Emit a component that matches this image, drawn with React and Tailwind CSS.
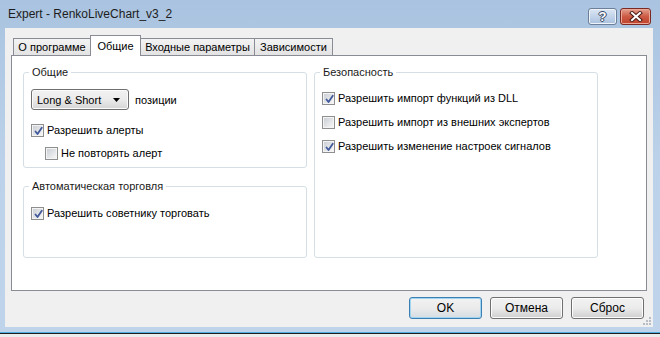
import React from 'react'

function CheckBox({ checked, label, className = '' }) {
    return (
        <div className={`flex h-[14px] items-center ${className}`}>
            <span className="relative flex h-[13px] w-[13px] shrink-0 items-center justify-center border border-[#8e8f8f] bg-white">
                <span className="h-[11px] w-[11px] border border-[#f4f4f4] bg-gradient-to-br from-[#cbcfd5] to-[#f6f6f6]" />
                {checked && (
                    <svg className="absolute left-[1px] top-[1px]" width="11" height="11" viewBox="0 0 11 11">
                        <path d="M2.5 5.5 L4.5 8 L8.8 1.8" fill="none" stroke="#41599b" strokeWidth="1.8" strokeLinecap="round" strokeLinejoin="round" />
                    </svg>
                )}
            </span>
            <span className="ml-[3px] whitespace-nowrap text-[11px] leading-[14px] text-[#000]">{label}</span>
        </div>
    )
}

function GroupBox({ title, className = '', children }) {
    return (
        <fieldset className={`rounded-[3px] border border-[#d5dfe5] px-[7px] ${className}`}>
            <legend className="-ml-[2px] px-[3px] text-[11px] leading-[14px] text-[#1a1a1a]">{title}</legend>
            {children}
        </fieldset>
    )
}

function Button({ label, primary }) {
    return (
        <button
            className={`flex h-[22px] w-[73px] items-center justify-center rounded-[3px] border font-['Liberation_Sans',Arial,sans-serif] text-[12px] font-normal text-black ${
                primary
                    ? 'border-[#3c7fb1] bg-gradient-to-b from-[#f2f2f2] via-[#ebebeb] to-[#d6dde2] shadow-[inset_0_0_0_1px_#9fd5f3]'
                    : 'border-[#707070] bg-gradient-to-b from-[#f2f2f2] via-[#ebebeb] to-[#cfcfcf] shadow-[inset_0_0_0_1px_#fcfcfc]'
            }`}
        >
            {label}
        </button>
    )
}

export default function App() {
    const tabs = [
        { label: 'О программе', w: 'w-[78px]' },
        { label: 'Общие', w: 'w-[51px]', active: true },
        { label: 'Входные параметры', w: 'w-[115px]' },
        { label: 'Зависимости', w: 'w-[79px]' },
    ]

    return (
        <div className="flex h-[337px] w-[660px] flex-col overflow-hidden bg-[#ececec] font-['Liberation_Sans',Arial,sans-serif]">
            {/* window */}
            <div className="flex h-[332px] shrink-0 flex-col bg-gradient-to-b from-[#a9c3e0] via-[#bcd2ea] to-[#bfd4eb]">
                {/* title bar */}
                <div className="flex h-[28px] shrink-0 items-start justify-between pl-[8px] pr-[9px]">
                    <div className="pt-[7px] text-[12px] leading-[14px] text-[#1c1c1c]">Expert - RenkoLiveChart_v3_2</div>
                    <div className="flex gap-[3px] pt-[8px]">
                        <div className="flex h-[17px] w-[29px] items-center justify-center rounded-[3px] border border-[#6d7f99] bg-gradient-to-b from-[#dbe6f3] via-[#c2d4ea] to-[#a9c0dd] shadow-[inset_0_0_0_1px_#eef3fa]">
                            <span className="text-[13px] font-bold leading-[13px] text-white [text-shadow:0_0_1px_#3a4a66,1px_0_0_#3a4a66,-1px_0_0_#3a4a66,0_1px_0_#3a4a66,0_-1px_0_#3a4a66]">?</span>
                        </div>
                        <div className="flex h-[17px] w-[31px] items-center justify-center rounded-[3px] border border-[#7a2a22] bg-gradient-to-b from-[#e3a08f] via-[#cc5a44] to-[#c0412c] shadow-[inset_0_0_0_1px_#eaa896]">
                            <svg width="14" height="11" viewBox="0 0 14 11">
                                <path d="M3 2 L11 9 M11 2 L3 9" stroke="#4a1c16" strokeWidth="4" strokeLinecap="square" />
                                <path d="M3 2 L11 9 M11 2 L3 9" stroke="#ffffff" strokeWidth="2" strokeLinecap="square" />
                            </svg>
                        </div>
                    </div>
                </div>

                {/* client area */}
                <div className="relative mb-[5px] ml-[5px] mr-[7px] flex flex-1 flex-col bg-[#f0f0f0] px-[6px] pt-[7px]">
                    {/* tabs */}
                    <div className="relative z-10 flex h-[20px] items-end pl-[2px]">
                        {tabs.map((t, i) =>
                            t.active ? (
                                <div
                                    key={t.label}
                                    className={`${t.w} -mb-px -ml-px flex h-[21px] items-start justify-center whitespace-nowrap border border-b-0 border-[#898c95] bg-white pt-[3px] text-[11px] leading-[14px] text-black`}
                                >
                                    {t.label}
                                </div>
                            ) : (
                                <div
                                    key={t.label}
                                    className={`${t.w} ${i > 0 ? '-ml-px' : ''} flex h-[17px] items-start justify-center whitespace-nowrap border border-b-0 border-[#898c95] bg-gradient-to-b from-[#f3f3f3] to-[#e3e3e3] pt-[1px] text-[11px] leading-[14px] text-black`}
                                >
                                    {t.label}
                                </div>
                            )
                        )}
                    </div>

                    {/* tab page */}
                    <div className="flex h-[236px] shrink-0 items-start border border-[#898c95] bg-white pl-[11px] pt-[9px]">
                        <div className="flex w-[284px] flex-col gap-[11px]">
                            <GroupBox title="Общие" className="h-[103px]">
                                <div className="mt-[10px] flex items-center">
                                    <div className="flex h-[21px] w-[98px] items-center justify-between rounded-[3px] border border-[#707070] bg-gradient-to-b from-[#f2f2f2] via-[#ebebeb] to-[#d5d5d5] pl-[5px] pr-[8px] shadow-[inset_0_0_0_1px_#fbfbfb]">
                                        <span className="text-[11px] leading-[14px] text-black">Long &amp; Short</span>
                                        <svg width="7" height="4" viewBox="0 0 7 4">
                                            <path d="M0 0 H7 L3.5 4 Z" fill="#000" />
                                        </svg>
                                    </div>
                                    <span className="ml-[6px] text-[11px] leading-[14px] text-black">позиции</span>
                                </div>
                                <CheckBox checked label="Разрешить алерты" className="mt-[13px]" />
                                <CheckBox label="Не повторять алерт" className="ml-[14px] mt-[9px]" />
                            </GroupBox>

                            <GroupBox title="Автоматическая торговля" className="h-[79px]">
                                <CheckBox checked label="Разрешить советнику торговать" className="mt-[13px]" />
                            </GroupBox>
                        </div>

                        <div className="ml-[7px] w-[284px]">
                            <GroupBox title="Безопасность" className="h-[193px]">
                                <div className="mt-[12px] flex flex-col gap-[10px]">
                                    <CheckBox checked label="Разрешить импорт функций из DLL" />
                                    <CheckBox label="Разрешить импорт из внешних экспертов" />
                                    <CheckBox checked label="Разрешить изменение настроек сигналов" />
                                </div>
                            </GroupBox>
                        </div>
                    </div>

                    {/* buttons */}
                    <div className="mt-[6px] flex justify-end gap-[8px] pr-[3px]">
                        <Button label="OK" primary />
                        <Button label="Отмена" />
                        <Button label="Сброс" />
                    </div>

                    {/* size grip */}
                    <svg className="absolute bottom-[2px] right-[2px]" width="10" height="10" viewBox="0 0 10 10">
                        {[[8, 2], [8, 5], [5, 5], [8, 8], [5, 8], [2, 8]].map(([x, y]) => (
                            <rect key={`${x}-${y}`} x={x} y={y} width="2" height="2" fill="#b8bcc4" />
                        ))}
                    </svg>
                </div>
            </div>
            <div className="h-px shrink-0 bg-[#4fb0e0]" />
            <div className="h-px shrink-0 bg-[#1e1e1e]" />
        </div>
    )
}
